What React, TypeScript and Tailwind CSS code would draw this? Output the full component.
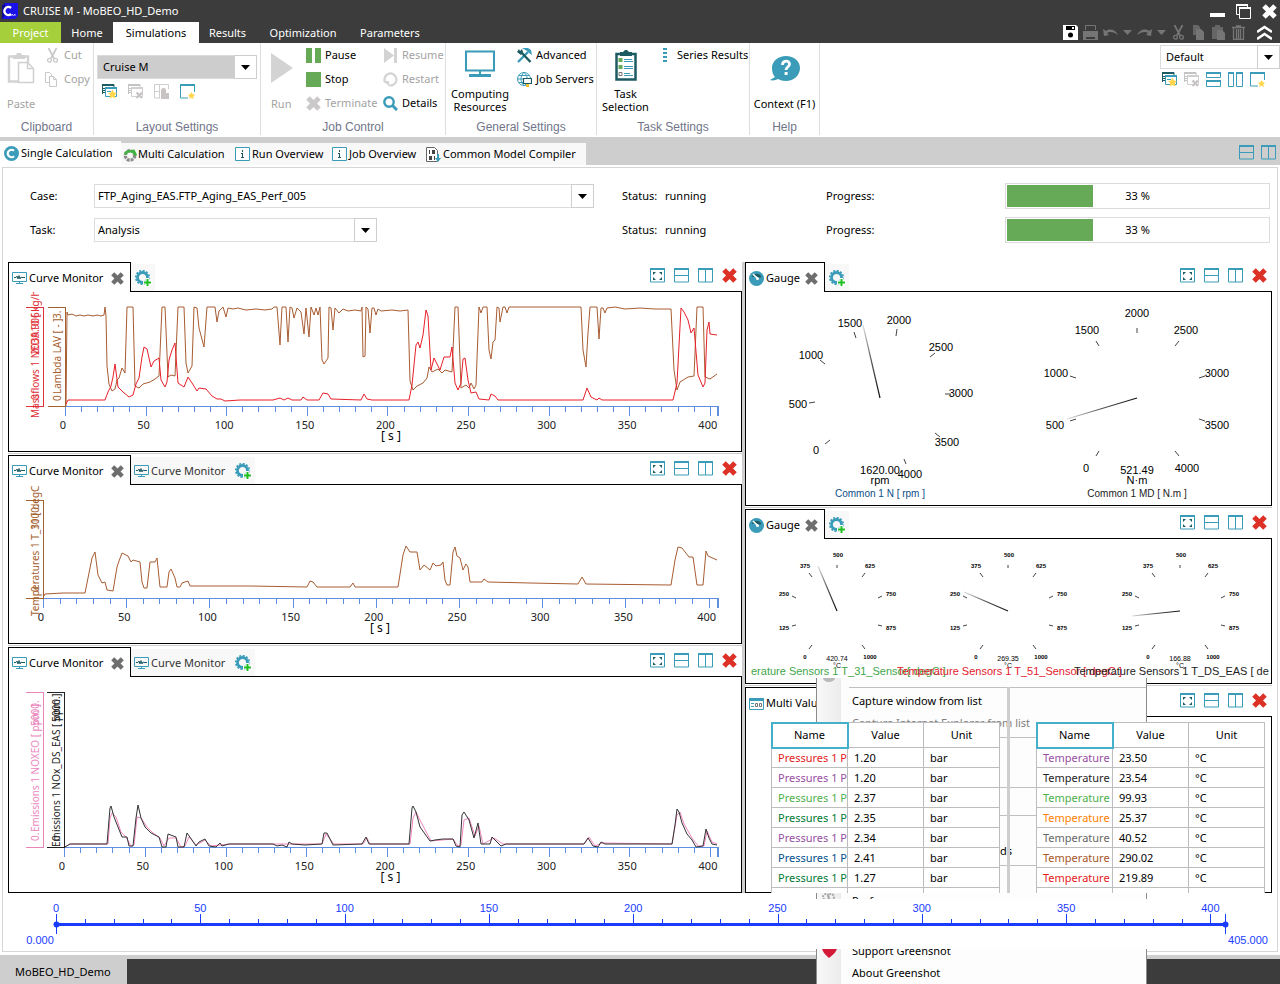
import type { ReactNode } from 'react'

const TEAL = '#3a9cb8'
const DARK_TEAL = '#1d5b63'
const STAR = 'M10.5 5.5l1.500 3 3 .400-2.200 2.200.6 3.400-2.900-1.600-2.900 1.600.6-3.400L6 8.900l3-.4z'

type Point = [number, number]

/* ---------- icons ---------- */

function Icon({ children, size = 15 }: { children: ReactNode; size?: number }) {
  return (
    <svg width={size} height={size} viewBox="0 0 15 15" className="block shrink-0" aria-hidden="true">
      {children}
    </svg>
  )
}

function RowsIcon() {
  return (
    <Icon>
      <path d="M.5 1v13h14V1M.5 7.5h14" fill="none" stroke={TEAL} />
      <path d="M0 0h15v2H0z" fill={TEAL} />
    </Icon>
  )
}

function ColumnsIcon() {
  return (
    <Icon>
      <path d="M.5 1v13h14V1M7.5 1v13" fill="none" stroke={TEAL} />
      <path d="M0 0h15v2H0z" fill={TEAL} />
    </Icon>
  )
}

function FullIcon() {
  return (
    <Icon>
      <path d="M.5 1v13h14V1" fill="none" stroke={TEAL} />
      <path d="M0 0h15v2H0z" fill={TEAL} />
      <path d="M3 4h3L3 7zM12 4v3L9 4zM3 12V9l3 3zM12 12H9l3-3z" fill={DARK_TEAL} />
    </Icon>
  )
}

function SplitRowsIcon() {
  return (
    <Icon>
      <path d="M.5.5h14v5H.5zM.5 9.5h14v5H.5z" fill="none" stroke={TEAL} />
      <path d="M0 0h15v2H0zM0 8h15v2H0z" fill={TEAL} />
    </Icon>
  )
}

function SplitColumnsIcon() {
  return (
    <Icon>
      <path d="M.5.5h5v14h-5zM8.5.5h6v14h-6z" fill="none" stroke={TEAL} />
      <path d="M0 0h6v2H0zM8 0h7v2H8z" fill={TEAL} />
    </Icon>
  )
}

function LayoutStarIcon() {
  return (
    <Icon>
      <path d="M.5 10V.5H12V3" fill="none" stroke={DARK_TEAL} />
      <path d="M0 0h12v2H0zM1 4h2v1H1zM1 6h2v1H1zM1 8h2v1H1z" fill={DARK_TEAL} />
      <path d="M3.5 3.5h11v9h-11z" fill="#fff" stroke={TEAL} />
      <path d="M3 3h12v2H3zM5 7h4v1H5z" fill={TEAL} />
      <path d={STAR} fill="#ffd54a" />
    </Icon>
  )
}

function LayoutDeleteIcon() {
  return (
    <Icon>
      <path d="M.5 10V.5H12V3" fill="none" stroke="#c4c4c4" />
      <path d="M0 0h12v2H0zM1 4h2v1H1zM1 6h2v1H1zM1 8h2v1H1z" fill="#c4c4c4" />
      <path d="M3.5 3.5h11v9h-11z" fill="#fff" stroke="#d0d0d0" />
      <path d="M3 3h12v2H3z" fill="#d0d0d0" />
      <path d="M8.5 8.5l5.5 5.5M14 8.5L8.5 14" stroke="#c8c4c4" strokeWidth="2.4" />
    </Icon>
  )
}

function LayoutSaveIcon() {
  return (
    <Icon>
      <path d="M6 14H.5V.5h14V5M5.5 1v13M1 7.5h5" fill="none" stroke="#cfcfcf" />
      <path d="M7 9h8v6H7z" fill="#c8c4c4" />
      <path d="M7 9V6.500a2.500 2.500 0 015 0V9" fill="#c8c4c4" />
    </Icon>
  )
}

function WindowStarIcon() {
  return (
    <Icon>
      <path d="M8 14H.5V1h14v7" fill="none" stroke={TEAL} />
      <path d="M0 0h15v2H0z" fill={TEAL} />
      <path d="M11.500 8l1.200 2.300 2.300.4-1.700 1.700.5 2.600-2.300-1.200-2.300 1.200.5-2.600L8 10.700l2.300-.4z" fill="#ffd54a" />
    </Icon>
  )
}

function CrossIcon({ color, size = 15 }: { color: string; size?: number }) {
  return (
    <Icon size={size}>
      <path d="M2 2l11 11M13 2L2 13" stroke={color} strokeWidth="5" />
    </Icon>
  )
}

function ScissorsIcon({ color }: { color: string }) {
  return (
    <Icon>
      <path d="M3.500 0l5.500 10.500M11.500 0L6 10.500" stroke={color} strokeWidth="1.800" />
      <circle cx="4.500" cy="12.300" r="1.900" fill="none" stroke={color} strokeWidth="1.300" />
      <circle cx="10.500" cy="12.300" r="1.900" fill="none" stroke={color} strokeWidth="1.300" />
    </Icon>
  )
}

function CopyOutlineIcon() {
  return (
    <Icon>
      <path d="M4 10.500H.5v-10h4l2 2V4M4.500 4.500h4l3 3v7h-7zM8.500 4.500v3h3" fill="none" stroke="#c9c9c9" />
    </Icon>
  )
}

function MonitorCurveIcon() {
  return (
    <Icon>
      <path d="M.5 1.500h14v9H.5zM7.500 10v3M4 12.500h7" fill="none" stroke={TEAL} />
      <path d="M2 6.500h2l1-1.500 1 3 1-3.500 1 3.500 1-2 1 .500h3" fill="none" stroke={DARK_TEAL} />
    </Icon>
  )
}

function GaugeIcon() {
  return (
    <Icon>
      <circle cx="7.500" cy="7.500" r="7.500" fill={TEAL} />
      <path d="M2.500 6a5.500 5.500 0 0110 0L9 7 7.500 5z" fill={DARK_TEAL} />
      <path d="M4 3l4.500 4.500" stroke="#fff" strokeWidth="1.600" />
      <circle cx="8.500" cy="7.500" r="1.500" fill="#fff" />
    </Icon>
  )
}

function MultiValueIcon() {
  return (
    <Icon>
      <path d="M.5 2.500h14v11H.5z" fill="#fff" stroke={TEAL} />
      <path d="M0 2h15v3H0zM2 7h3v1H2zM2 10h3v1H2z" fill={TEAL} />
      <path d="M6.500 7.500h2v3h-2zM10.500 7.500h2v3h-2z" fill="none" stroke="#777" />
    </Icon>
  )
}

function GearPlusIcon() {
  return (
    <svg width="17" height="17" viewBox="0 0 17 17" className="block" aria-hidden="true">
      <circle cx="7.500" cy="7.500" r="5" fill="none" stroke={TEAL} strokeWidth="2.800" />
      <circle cx="7.500" cy="7.500" r="6.800" fill="none" stroke={TEAL} strokeWidth="1.600" strokeDasharray="2 1.560" />
      <path d="M8 12.500h9M12.500 8v9" stroke="#fff" strokeWidth="4" />
      <path d="M9 12.500h7M12.500 9v7" stroke="#1fbf1f" strokeWidth="2" />
    </svg>
  )
}

function InfoIcon() {
  return (
    <Icon>
      <path d="M.5.5h14v13H.5z" fill="#fff" stroke={TEAL} />
      <path d="M7 3h1v2H7zM6 6h2v4h1v1H6v-1h1V7H6z" fill={DARK_TEAL} />
    </Icon>
  )
}

function Arrow({ color = '#000' }: { color?: string }) {
  return (
    <svg width="9" height="5" viewBox="0 0 9 5" className="block" aria-hidden="true">
      <path d="M0 0h9L4.500 5z" fill={color} />
    </svg>
  )
}

/* ---------- form pieces ---------- */

type ComboProps = {
  id: string
  value: string
  className: string
  selectClass?: string
  label?: string
}

function Combo({ id, value, className, selectClass = 'bg-white pl-1', label }: ComboProps) {
  return (
    <div className={`relative h-6 ${className}`}>
      <select
        id={id}
        aria-label={label}
        defaultValue={value}
        className={`h-full w-full appearance-none border border-[#dcdcdc] pr-6 outline-none ${selectClass}`}
      >
        <option>{value}</option>
      </select>
      <span className="pointer-events-none absolute inset-y-0 right-0 flex w-[23px] items-center justify-center border border-[#cecece] bg-white pr-px">
        <Arrow />
      </span>
    </div>
  )
}

function IconButton({ label, children }: { label: string; children: ReactNode }) {
  return (
    <button type="button" aria-label={label} className="flex h-4 shrink-0 items-center justify-center">
      {children}
    </button>
  )
}

/* ---------- title bar and ribbon ---------- */

const menuTabs = [
  { name: 'Project', className: 'w-[61px] bg-[#a6cf3c] text-white' },
  { name: 'Home', className: 'w-[52px] text-white' },
  { name: 'Simulations', className: 'w-[86px] bg-white text-black' },
  { name: 'Results', className: 'w-[57px] text-white' },
  { name: 'Optimization', className: 'w-[94px] text-white' },
  { name: 'Parameters', className: 'w-[80px] text-white' },
]

function TitleBar() {
  return (
    <header className="bg-[#3c3c3c] text-white">
      <div className="flex h-[22px] items-center gap-[5px] pr-[3px] pl-[2px]">
        <svg width="16" height="16" viewBox="0 0 16 16" aria-hidden="true">
          <path d="M0 3l3-3h13v13l-3 3H0z" fill="#1a10e8" />
          <path d="M0 3l3-3v12l-3 4z" fill="#0c0890" />
          <path d="M9 5a4 4 0 100 6" fill="none" stroke="#fff" strokeWidth="2.400" />
          <path d="M10 13v-2l1.500 1.500L13 11v2" fill="none" stroke="#dde" strokeWidth=".8" />
        </svg>
        <h1>CRUISE M - MoBEO_HD_Demo</h1>
        <div className="ml-auto flex items-center gap-[11px]">
          <IconButton label="Minimize">
            <Icon>
              <path d="M0 9h15v4H0z" fill="#fff" />
            </Icon>
          </IconButton>
          <IconButton label="Restore">
            <Icon>
              <path d="M3 10.500H.5v-10h11V3M3.500 3.500h11v11h-11z" fill="none" stroke="#fff" />
              <path d="M0 0h12v2H0zM3 3h12v2H3z" fill="#fff" />
            </Icon>
          </IconButton>
          <IconButton label="Close">
            <CrossIcon color="#fff" />
          </IconButton>
        </div>
      </div>
      <nav className="flex h-[21px] items-stretch">
        {menuTabs.map((tab) => (
          <button key={tab.name} type="button" className={`pt-px text-center ${tab.className}`}>
            {tab.name}
          </button>
        ))}
        <div className="ml-auto flex items-center gap-[5px] pr-2">
          <IconButton label="Save">
            <Icon>
              <path d="M0 0h13l2 2v13H0z" fill="#fff" />
              <path d="M3 1h9v4H3z" fill="#000" />
              <path d="M9 2h2v2H9z" fill="#fff" />
              <circle cx="7.500" cy="10" r="2.500" fill="#000" />
            </Icon>
          </IconButton>
          <IconButton label="Print">
            <Icon>
              <path d="M2.500 5V.5h10V5" fill="none" stroke="#757575" />
              <path d="M0 6h15v9H0z" fill="#757575" />
              <path d="M3 12h9v2H3z" fill="#3c3c3c" />
            </Icon>
          </IconButton>
          <IconButton label="Undo">
            <Icon>
              <path d="M0 4l1 7 5-1-2-2c3-2 7-1 11 2-2-5-8-7-12-4z" fill="#757575" />
            </Icon>
          </IconButton>
          <Arrow color="#757575" />
          <IconButton label="Redo">
            <Icon>
              <path d="M15 4l-1 7-5-1 2-2C8 6 4 7 0 10 2 5 8 3 12 6z" fill="#757575" />
            </Icon>
          </IconButton>
          <Arrow color="#757575" />
          <IconButton label="Cut">
            <ScissorsIcon color="#757575" />
          </IconButton>
          <IconButton label="Copy">
            <Icon>
              <path d="M2 0h5l2 2v8H2z" fill="#666" />
              <path d="M5 4h5l3 3v8H5z" fill="#757575" />
            </Icon>
          </IconButton>
          <IconButton label="Paste">
            <Icon>
              <path d="M1 2h3V0h5v2h3v12H1z" fill="#666" />
              <path d="M6 5h5l3 3v7H6z" fill="#757575" />
            </Icon>
          </IconButton>
          <IconButton label="Delete">
            <Icon>
              <path d="M1 2.500h13M5 1h5M2.500 3v11.500h10V3M5.500 4v10M7.500 4v10M9.500 4v10" fill="none" stroke="#757575" strokeWidth="1.300" />
            </Icon>
          </IconButton>
          <span className="w-px" />
          <IconButton label="Collapse ribbon">
            <Icon>
              <path d="M0 7l7.500-5L15 7M0 14l7.500-5L15 14" fill="none" stroke="#fff" strokeWidth="2.600" />
            </Icon>
          </IconButton>
        </div>
      </nav>
    </header>
  )
}

type GroupProps = { title: string; className: string; children: ReactNode }

function RibbonGroup({ title, className, children }: GroupProps) {
  return (
    <section className={`flex h-[92px] flex-col border-r border-[#dedede] ${className}`}>
      <div className="flex h-[76px]">{children}</div>
      <h2 className="pt-px text-center font-['Liberation_Sans',sans-serif] text-[12px] leading-4 text-[#70758a]">
        {title}
      </h2>
    </section>
  )
}

type SmallButtonProps = { label: string; icon: ReactNode; disabled?: boolean }

function SmallButton({ label, icon, disabled }: SmallButtonProps) {
  return (
    <button
      type="button"
      disabled={disabled}
      className="flex h-6 items-center gap-1 whitespace-nowrap text-black disabled:text-[#a3a3a3]"
    >
      {icon}
      {label}
    </button>
  )
}

function Ribbon() {
  return (
    <div className="flex h-[94px] bg-white">
      <RibbonGroup title="Clipboard" className="w-[94px]">
        <button type="button" disabled className="flex w-[45px] flex-col pl-[7px] text-left text-[#a3a3a3]">
          <span className="flex h-[50px] items-center">
            <svg width="28" height="32" viewBox="0 0 28 32" aria-hidden="true">
              <path d="M11 29.500H2v-25h19v6" fill="none" stroke="#d3d3d3" strokeWidth="2.400" />
              <path d="M6 3h3l1-2h4l1 2h3v4H6z" fill="#d3d3d3" />
              <path d="M11.500 10.500h9l6 6v14h-15zM20.500 10.500v6h6" fill="#fff" stroke="#d0d0d0" strokeWidth="1.500" />
            </svg>
          </span>
          <span className="leading-[22px]">Paste</span>
        </button>
        <div className="flex flex-col">
          <SmallButton label="Cut" disabled icon={<ScissorsIcon color="#c9c9c9" />} />
          <SmallButton label="Copy" disabled icon={<CopyOutlineIcon />} />
        </div>
      </RibbonGroup>

      <RibbonGroup title="Layout Settings" className="w-[167px]">
        <div className="flex flex-col gap-1 pt-3 pl-[3px]">
          <Combo id="layout" label="Layout" value="Cruise M" className="w-[160px]" selectClass="bg-[#cdcdcd] pl-[5px]" />
          <div className="flex gap-[11px] pl-[5px]">
            <IconButton label="Save layout">
              <LayoutStarIcon />
            </IconButton>
            <IconButton label="Delete layout">
              <LayoutDeleteIcon />
            </IconButton>
            <IconButton label="Lock layout">
              <LayoutSaveIcon />
            </IconButton>
            <IconButton label="New window">
              <WindowStarIcon />
            </IconButton>
          </div>
        </div>
      </RibbonGroup>

      <RibbonGroup title="Job Control" className="w-[185px]">
        <button type="button" disabled className="flex w-[45px] flex-col pl-[10px] text-left text-[#a3a3a3]">
          <span className="flex h-[50px] items-center">
            <svg width="22" height="30" viewBox="0 0 22 30" aria-hidden="true">
              <path d="M0 0l22 15L0 30z" fill="#d3d3d3" />
            </svg>
          </span>
          <span className="leading-[22px]">Run</span>
        </button>
        <div className="flex w-[77px] flex-col">
          <SmallButton label="Pause" icon={<Icon><path d="M0 0h6v15H0zM9 0h6v15H9z" fill="#66a957" /></Icon>} />
          <SmallButton label="Stop" icon={<Icon><path d="M0 0h15v15H0z" fill="#66a957" /></Icon>} />
          <SmallButton label="Terminate" disabled icon={<CrossIcon color="#cbc9c9" />} />
        </div>
        <div className="flex flex-col">
          <SmallButton label="Resume" disabled icon={<Icon><path d="M1 0l10 7.500L1 15zM11 0h3v15h-3z" fill="#d3d3d3" /></Icon>} />
          <SmallButton
            label="Restart"
            disabled
            icon={
              <Icon>
                <path d="M6 13.300a6 6 0 10-3.800-3" fill="none" stroke="#d3d3d3" strokeWidth="2.200" />
                <path d="M0 9h6v5z" fill="#d3d3d3" />
              </Icon>
            }
          />
          <SmallButton
            label="Details"
            icon={
              <Icon>
                <circle cx="6" cy="6" r="4.700" fill="none" stroke={TEAL} strokeWidth="2.400" />
                <path d="M9 9l5 5" stroke={TEAL} strokeWidth="3" />
              </Icon>
            }
          />
        </div>
      </RibbonGroup>

      <RibbonGroup title="General Settings" className="w-[151px]">
        <button type="button" className="flex w-[68px] flex-col items-center text-center">
          <span className="flex h-[44px] items-end pb-[9px]">
            <svg width="30" height="28" viewBox="0 0 30 28" aria-hidden="true">
              <path d="M1 1.500h28v19H1zM15 21v5" fill="none" stroke={TEAL} strokeWidth="2" />
              <path d="M4 24h22v3H4z" fill={TEAL} />
            </svg>
          </span>
          <span className="leading-[13px]">Computing Resources</span>
        </button>
        <div className="flex flex-col pl-[3px]">
          <SmallButton
            label="Advanced"
            icon={
              <Icon>
                <path d="M1 14L11 4" stroke={TEAL} strokeWidth="2.400" />
                <path d="M5 0h6l3 2 1 5-3-2-2-2z" fill={TEAL} />
                <path d="M4 4l9.500 10" stroke={DARK_TEAL} strokeWidth="2.400" />
                <path d="M0 4l2-3 1 2 2-2 1 3-2 3z" fill={DARK_TEAL} />
              </Icon>
            }
          />
          <SmallButton
            label="Job Servers"
            icon={
              <Icon>
                <circle cx="7" cy="7" r="6.500" fill="none" stroke={TEAL} />
                <path d="M.5 7h13M7 .5C3 4 3 10 7 13.500M7 .5c4 3 4 8 1 13M2 3.500h10M2 10.500h10" fill="none" stroke={TEAL} />
                <path d="M6.500 6.500h8v5h-8z" fill="#fff" stroke={DARK_TEAL} strokeWidth="1.200" />
                <path d="M9 12h3v3H9z" fill="#f2c230" />
              </Icon>
            }
          />
        </div>
      </RibbonGroup>

      <RibbonGroup title="Task Settings" className="w-[153px]">
        <button type="button" className="flex w-[57px] flex-col items-center text-center">
          <span className="flex h-[44px] items-end pb-[6px]">
            <svg width="22" height="31" viewBox="0 0 22 31" aria-hidden="true">
              <path d="M1.500 4h19v25.500h-19z" fill="#fff" stroke={DARK_TEAL} strokeWidth="2.500" />
              <path d="M5 2h3l2-2h2l2 2h3v4H5z" fill={DARK_TEAL} />
              <path d="M3.500 8h4v4h-4zM3.500 15h4v4h-4z" fill="#66a957" />
              <path d="M4 22.500h3v3H4z" fill="none" stroke="#777" />
              <path d="M9 9.500h8M9 11.500h9M9 16.500h9M9 18.500h9M9 23.500h6M9 25.500h9" stroke={TEAL} />
            </svg>
          </span>
          <span className="leading-[13px]">Task Selection</span>
        </button>
        <div className="flex flex-col pl-1">
          <SmallButton
            label="Series Results"
            icon={<Icon><path d="M5 0h4v2H5zM5 4h4v2H5zM5 8h4v2H5zM5 12h4v2H5z" fill={TEAL} /></Icon>}
          />
        </div>
      </RibbonGroup>

      <RibbonGroup title="Help" className="w-[70px]">
        <button type="button" className="flex w-full flex-col items-center whitespace-nowrap">
          <span className="flex h-[50px] items-center">
            <svg width="30" height="25" viewBox="0 0 30 25" aria-hidden="true">
              <path d="M16 0C8 0 2 5 2 12c0 4 1 7 3 9l-5 3c3 1 6 0 8-1 2 1 5 2 8 2 8 0 14-6 14-13S24 0 16 0z" fill={TEAL} />
              <path d="M12.500 9c0-5 7-5 7-1 0 3-3.500 3-3.500 6" fill="none" stroke="#fff" strokeWidth="2.800" />
              <path d="M14.600 16h3v3h-3z" fill="#fff" />
            </svg>
          </span>
          <span className="leading-[22px]">Context (F1)</span>
        </button>
      </RibbonGroup>

      <div className="ml-auto flex w-[120px] flex-col gap-[2px] pt-[2px]">
        <Combo id="view" label="View" value="Default" className="w-full" selectClass="bg-white pl-[5px]" />
        <div className="flex gap-[7px] pl-[2px]">
          <IconButton label="Save view">
            <LayoutStarIcon />
          </IconButton>
          <IconButton label="Delete view">
            <LayoutDeleteIcon />
          </IconButton>
          <IconButton label="Split rows">
            <SplitRowsIcon />
          </IconButton>
          <IconButton label="Split columns">
            <SplitColumnsIcon />
          </IconButton>
          <IconButton label="New view">
            <WindowStarIcon />
          </IconButton>
        </div>
      </div>
    </div>
  )
}

function DocumentTabs() {
  return (
    <div className="flex h-7 items-end bg-[#cecece] pr-1 whitespace-nowrap">
      <button type="button" className="flex h-6 w-[121px] items-center gap-[2px] bg-white pt-px pl-1">
        <Icon>
          <circle cx="7.500" cy="7.500" r="7.500" fill={TEAL} />
          <path d="M10 4.800a3.700 3.700 0 100 5.400" fill="none" stroke="#fff" strokeWidth="2.200" />
        </Icon>
        Single Calculation
      </button>
      <button type="button" className="flex h-[22px] w-[111px] items-center gap-px bg-[#f8f8f8] pt-px pl-[2px]">
        <Icon size={14}>
          <circle cx="7.500" cy="8" r="5" fill="none" stroke="#8d8d8d" strokeWidth="3.600" strokeDasharray="3 1" />
          <path d="M2 7a6 6 0 0111 0M11 2l3 6" fill="none" stroke="#3fb53f" strokeWidth="2.400" />
        </Icon>
        Multi Calculation
      </button>
      <button type="button" className="flex h-[22px] w-[98px] items-center gap-[2px] bg-[#f8f8f8] pt-px pl-[3px]">
        <InfoIcon />
        Run Overview
      </button>
      <button type="button" className="flex h-[22px] w-[94px] items-center gap-[2px] bg-[#f8f8f8] pt-px pl-[2px]">
        <InfoIcon />
        Job Overview
      </button>
      <button type="button" className="flex h-[22px] w-[162px] items-center gap-[2px] bg-[#f8f8f8] pt-px pl-[2px]">
        <Icon>
          <path d="M.5.5h8l3 3v11H.5z" fill="#fff" stroke="#666" />
          <path d="M3 3h1v4H3zM6 3h3v4H6zM3 9h3v4H3zM8 9h1v4H8z" fill="#444" />
          <path d="M11 7h2v4h2l-3 4-3-4h2z" fill={TEAL} />
        </Icon>
        Common Model Compiler
      </button>
      <div className="ml-auto flex gap-[7px] pb-[5px]">
        <IconButton label="Split horizontally">
          <RowsIcon />
        </IconButton>
        <IconButton label="Split vertically">
          <ColumnsIcon />
        </IconButton>
      </div>
    </div>
  )
}

/* ---------- run status ---------- */

type StatusRowProps = {
  id: string
  label: string
  value: string
  comboWidth: string
  progress: number
}

function StatusRow({ id, label, value, comboWidth, progress }: StatusRowProps) {
  return (
    <div className="grid h-[26px] grid-cols-[64px_528px_43px_161px_179px_1fr] items-center">
      <label htmlFor={id}>{label}</label>
      <Combo id={id} value={value} className={comboWidth} selectClass="bg-white pl-[3px]" />
      <span>Status:</span>
      <span>running</span>
      <span>Progress:</span>
      <div
        role="progressbar"
        aria-label={`${label} progress`}
        aria-valuenow={progress}
        className="relative h-[26px] border border-[#dcdcdc] p-px"
      >
        <div className="h-full bg-[#66a957]" style={{ width: `${progress}%` }} />
        <span className="absolute inset-0 text-center leading-6">{progress} %</span>
      </div>
    </div>
  )
}

/* ---------- docked panels ---------- */

type PanelProps = {
  title: string
  icon: ReactNode
  tabWidth: string
  second?: string
  closable?: boolean
  className?: string
  children: ReactNode
}

function Panel({ title, icon, tabWidth, second, closable = true, className = '', children }: PanelProps) {
  return (
    <section className={`flex flex-col bg-white ${className}`}>
      <div className="flex h-[29px] whitespace-nowrap">
        <button
          type="button"
          className={`relative flex h-[30px] items-center gap-[2px] border-x border-t border-black bg-white pt-px pl-[3px] ${tabWidth}`}
        >
          {icon}
          {title}
          {closable ? (
            <span className="ml-auto pr-[6px]">
              <CrossIcon color="#6e6e6e" size={13} />
            </span>
          ) : null}
        </button>
        {second ? (
          <button type="button" className="mt-[2px] flex w-[100px] items-center gap-[2px] bg-[#f8f8f8] pt-px pl-[3px] text-[#333]">
            <MonitorCurveIcon />
            {second}
          </button>
        ) : null}
        {closable ? (
          <button
            type="button"
            aria-label="Add monitor"
            className="mt-[2px] flex w-[24px] items-center justify-center bg-[#f8f8f8] pt-px"
          >
            <GearPlusIcon />
          </button>
        ) : null}
        <div className="ml-auto flex items-start gap-[9px] pt-[5px] pr-[5px]">
          <IconButton label="Full size">
            <FullIcon />
          </IconButton>
          <IconButton label="Split horizontally">
            <RowsIcon />
          </IconButton>
          <IconButton label="Split vertically">
            <ColumnsIcon />
          </IconButton>
          <IconButton label="Close panel">
            <CrossIcon color="#dd3026" />
          </IconButton>
        </div>
      </div>
      <div className="grow border border-black">{children}</div>
    </section>
  )
}

function Divider() {
  return <div className="my-px h-px bg-[#cecece]" />
}

/* ---------- curve charts ---------- */

const toPoints = (points: Point[]) => points.map((p) => p.join(',')).join(' ')

function Curve({ points, color }: { points: Point[]; color: string }) {
  return <polyline points={toPoints(points)} fill="none" stroke={color} strokeWidth="1" />
}

const tens = Array.from({ length: 41 }, (_, i) => i * 10)

function TimeAxis({ x, y, scale }: { x: number; y: number; scale: number }) {
  return (
    <g>
      <path d={`M${x} ${y + 0.5}H718`} stroke="#5f8fe0" shapeRendering="crispEdges" />
      <path d={`M718 ${y}v10`} stroke="#5f8fe0" strokeWidth="2" shapeRendering="crispEdges" />
      {tens.map((t) => (
        <path
          key={t}
          d={`M${Math.round(x + t * scale) - 0.5} ${y}v${t % 50 === 0 ? 10 : 6}`}
          stroke="#5f8fe0"
          shapeRendering="crispEdges"
        />
      ))}
      {tens
        .filter((t) => t % 50 === 0)
        .map((t) => (
          <text key={t} x={x + t * scale - 3} y={y + 23} textAnchor="middle" fontSize="11" fill="#222">
            {t}
          </text>
        ))}
      <text x={(x + 718) / 2 - 1} y={y + 34} textAnchor="middle" fontSize="12">
        [ s ]
      </text>
    </g>
  )
}

type ValueAxisProps = {
  x: number
  top: number
  bottom: number
  color: string
  name: string
  nameY: number
  max: string
  maxY: number
  min: string
  minY: number
}

function ValueAxis({ x, top, bottom, color, name, nameY, max, maxY, min, minY }: ValueAxisProps) {
  return (
    <g fill={color} fontSize="10">
      <path
        d={`M${x - 17} ${top + 0.5}h17.500V${bottom + 0.5}h-17.500`}
        fill="none"
        stroke={color}
        shapeRendering="crispEdges"
      />
      <text transform={`translate(${x - 4} ${nameY}) rotate(-90)`}>{name}</text>
      <text transform={`translate(${x - 4} ${maxY}) rotate(-90)`}>{max}</text>
      <text transform={`translate(${x - 4} ${minY}) rotate(-90)`}>{min}</text>
    </g>
  )
}

const lambda: Point[] = [
  [66, 406], [67, 312], [68, 315], [72, 314], [76, 316], [80, 315], [84, 316], [88, 315], [93, 316], [97, 315],
  [101, 316], [104, 315], [105, 307], [106, 316], [107, 366], [109, 384], [112, 391], [115, 389], [117, 380],
  [119, 378], [122, 368], [125, 373], [127, 307], [133, 307], [135, 386], [139, 388], [143, 384], [150, 382],
  [155, 379], [159, 376], [162, 307], [165, 307], [168, 377], [171, 375], [175, 376], [178, 307], [184, 307],
  [186, 363], [188, 373], [192, 366], [194, 307], [197, 308], [199, 328], [204, 347], [207, 307], [215, 307],
  [217, 322], [219, 311], [223, 307], [226, 317], [228, 308], [233, 309], [238, 308], [246, 310], [256, 309],
  [265, 310], [272, 309], [274, 307], [277, 307], [280, 345], [282, 307], [286, 307], [288, 342], [290, 307],
  [292, 308], [294, 318], [297, 308], [301, 312], [304, 334], [306, 308], [309, 337], [311, 307], [314, 315],
  [316, 308], [318, 315], [320, 307], [322, 360], [324, 364], [328, 358], [329, 307], [331, 308], [333, 330],
  [335, 308], [339, 313], [343, 309], [348, 311], [355, 310], [361, 311], [362, 307], [363, 357], [365, 356],
  [366, 307], [368, 309], [370, 333], [372, 308], [374, 308], [376, 315], [378, 309], [381, 311], [392, 310],
  [400, 311], [408, 310], [410, 381], [413, 390], [417, 386], [423, 383], [427, 378], [429, 367], [432, 372],
  [438, 369], [442, 373], [445, 370], [452, 372], [455, 307], [458, 307], [461, 388], [466, 385], [469, 388],
  [471, 383], [474, 389], [476, 385], [479, 307], [481, 313], [483, 307], [487, 307], [489, 350], [491, 359],
  [493, 342], [495, 340], [497, 307], [499, 308], [500, 322], [503, 307], [505, 307], [507, 313], [509, 307],
  [581, 307], [583, 350], [586, 367], [588, 333], [590, 307], [597, 307], [599, 339], [601, 308], [603, 308],
  [605, 313], [607, 308], [615, 307], [625, 309], [640, 308], [655, 309], [671, 309], [674, 370], [677, 390],
  [680, 382], [688, 377], [694, 376], [697, 307], [703, 307], [705, 377], [710, 379], [717, 374],
]

const massflow: Point[] = [
  [66, 404], [68, 400], [105, 400], [108, 392], [111, 386], [113, 377], [115, 364], [118, 387], [123, 392],
  [129, 397], [133, 395], [136, 384], [139, 378], [142, 357], [144, 347], [147, 349], [151, 367], [154, 361],
  [159, 358], [161, 380], [165, 387], [167, 382], [169, 360], [172, 350], [175, 343], [178, 383], [184, 387],
  [188, 377], [192, 383], [197, 391], [199, 388], [206, 389], [212, 396], [217, 399], [221, 399], [225, 401],
  [240, 400], [273, 400], [280, 398], [284, 400], [288, 398], [292, 400], [301, 400], [303, 397], [307, 400],
  [319, 400], [323, 393], [328, 394], [331, 399], [361, 400], [364, 394], [367, 399], [372, 400], [409, 400],
  [412, 385], [416, 345], [418, 342], [420, 348], [423, 335], [426, 310], [428, 316], [431, 370], [434, 358],
  [440, 370], [444, 357], [450, 357], [452, 347], [455, 383], [458, 390], [461, 383], [463, 359], [465, 358],
  [468, 380], [471, 393], [476, 392], [479, 399], [489, 400], [491, 394], [495, 396], [498, 400], [583, 400],
  [587, 388], [591, 397], [597, 400], [599, 398], [602, 400], [673, 400], [677, 383], [681, 308], [684, 312],
  [688, 320], [691, 333], [694, 328], [698, 375], [703, 387], [705, 383], [707, 330], [709, 322], [710, 334],
  [717, 335],
]

const temperature: Point[] = [
  [44, 596], [45, 594], [63, 593], [85, 593], [87, 583], [92, 558], [95, 552], [98, 575], [102, 583], [105, 582],
  [107, 590], [113, 591], [117, 567], [119, 561], [122, 553], [128, 556], [131, 562], [133, 560], [140, 562],
  [142, 582], [144, 588], [147, 588], [150, 562], [155, 562], [157, 558], [160, 587], [167, 587], [169, 572],
  [171, 569], [175, 578], [177, 587], [180, 587], [182, 583], [188, 581], [190, 586], [250, 586], [307, 587],
  [310, 581], [313, 582], [317, 587], [350, 587], [353, 583], [355, 587], [398, 587], [403, 555], [406, 546],
  [410, 552], [417, 552], [420, 570], [424, 565], [430, 570], [433, 563], [436, 566], [441, 565], [443, 562],
  [445, 580], [447, 585], [450, 585], [453, 552], [455, 547], [457, 556], [460, 558], [463, 570], [466, 564],
  [468, 567], [470, 582], [482, 582], [484, 579], [488, 582], [530, 583], [578, 584], [582, 577], [586, 584],
  [671, 585], [675, 560], [678, 547], [682, 548], [689, 557], [693, 557], [697, 585], [703, 585], [706, 551],
  [708, 556], [717, 560],
]

const noxEas: Point[] = [
  [65, 847], [70, 844], [107, 844], [110, 808], [111, 806], [114, 817], [118, 827], [122, 837], [127, 837],
  [129, 846], [133, 846], [136, 818], [138, 805], [141, 818], [145, 827], [151, 833], [159, 837], [162, 847],
  [166, 847], [168, 834], [176, 837], [178, 847], [184, 847], [187, 833], [192, 840], [196, 846], [199, 842],
  [205, 839], [209, 846], [216, 847], [220, 843], [222, 846], [229, 844], [273, 844], [277, 846], [282, 845],
  [287, 847], [289, 842], [292, 844], [305, 845], [322, 844], [324, 833], [327, 833], [333, 845], [362, 844],
  [366, 837], [369, 844], [409, 844], [412, 808], [413, 806], [416, 812], [420, 827], [430, 841], [435, 840],
  [443, 839], [453, 839], [456, 846], [460, 847], [462, 815], [464, 812], [469, 820], [474, 838], [478, 823],
  [481, 844], [490, 844], [492, 837], [497, 842], [501, 846], [506, 844], [584, 844], [588, 838], [593, 846],
  [598, 847], [601, 842], [605, 844], [672, 844], [675, 825], [677, 809], [679, 812], [682, 823], [687, 834],
  [692, 840], [696, 847], [703, 846], [706, 829], [709, 838], [712, 844], [717, 845],
]

const noxEo: Point[] = [
  [65, 847], [70, 844], [108, 844], [110, 818], [112, 813], [116, 817], [121, 832], [126, 837], [131, 846],
  [134, 845], [137, 817], [141, 818], [147, 827], [153, 833], [160, 838], [164, 846], [169, 838], [176, 838],
  [181, 847], [185, 846], [189, 837], [196, 845], [205, 840], [211, 846], [229, 844], [322, 844], [326, 834],
  [334, 844], [363, 844], [367, 838], [370, 844], [410, 844], [413, 818], [416, 812], [421, 822], [431, 841],
  [453, 839], [458, 846], [461, 845], [464, 820], [469, 818], [475, 836], [479, 826], [483, 844], [494, 838],
  [503, 844], [584, 844], [589, 837], [595, 846], [602, 843], [672, 844], [677, 815], [680, 812], [684, 824],
  [692, 838], [698, 846], [704, 846], [707, 831], [712, 842], [717, 844],
]

function MassflowChart() {
  return (
    <svg viewBox="9 292 732 159" className="block h-auto w-full" role="img" aria-label="Massflow and lambda">
      <TimeAxis x={66} y={406} scale={1.612} />
      <Curve points={lambda} color="#a85c32" />
      <Curve points={massflow} color="#e8202a" />
      <ValueAxis
        x={43} top={307} bottom={406} color="#e03038"
        name="Massflows 1 NEDA10 [ kg/h" nameY={418} max="2039.906" maxY={355} min="0" minY={400}
      />
      <ValueAxis
        x={65} top={307} bottom={406} color="#a5602f"
        name="Lambda LAV [ - ]" nameY={394} max="3." maxY={319} min="0" minY={401}
      />
    </svg>
  )
}

function TemperatureChart() {
  return (
    <svg viewBox="9 485 732 158" className="block h-auto w-full" role="img" aria-label="Temperature">
      <TimeAxis x={44} y={598} scale={1.664} />
      <Curve points={temperature} color="#a85c32" />
      <ValueAxis
        x={43} top={500} bottom={598} color="#a5602f"
        name="Temperatures 1 T_31 [ degC" nameY={616} max="1000." maxY={530} min="0" minY={592}
      />
    </svg>
  )
}

function EmissionChart() {
  return (
    <svg viewBox="9 677 732 215" className="block h-auto w-full" role="img" aria-label="Emissions">
      <TimeAxis x={65} y={847} scale={1.615} />
      <Curve points={noxEo} color="#ef86bd" />
      <Curve points={noxEas} color="#333" />
      <ValueAxis
        x={43} top={692} bottom={847} color="#ea86bd"
        name="Emissions 1 NOXEO [ ppm ]" nameY={832} max="5000." maxY={726} min="0." minY={841}
      />
      <ValueAxis
        x={64} top={692} bottom={847} color="#222"
        name="Emissions 1 NOx_DS_EAS [ ppm ]" nameY={847} max="5000." maxY={722} min="0" minY={841}
      />
    </svg>
  )
}

/* ---------- gauges ---------- */

type Mark = { text: string; at: Point; tick: [number, number, number, number] }

const speedMarks: Mark[] = [
  { text: '0', at: [816, 450], tick: [830, 440, 825, 444] },
  { text: '500', at: [798, 404], tick: [809, 403, 815, 402] },
  { text: '1000', at: [811, 355], tick: [820, 360, 825, 364] },
  { text: '1500', at: [850, 323], tick: [854, 332, 856, 338] },
  { text: '2000', at: [899, 320], tick: [897, 329, 896, 336] },
  { text: '2500', at: [941, 347], tick: [935, 353, 930, 357] },
  { text: '3000', at: [961, 393], tick: [945, 394, 951, 394] },
  { text: '3500', at: [947, 442], tick: [935, 433, 940, 437] },
  { text: '4000', at: [910, 474], tick: [904, 459, 906, 464] },
]

const torqueMarks: Mark[] = [
  { text: '0', at: [1086, 468], tick: [1099, 451, 1096, 456] },
  { text: '500', at: [1055, 425], tick: [1070, 421, 1076, 419] },
  { text: '1000', at: [1056, 373], tick: [1070, 376, 1076, 378] },
  { text: '1500', at: [1087, 330], tick: [1096, 341, 1099, 346] },
  { text: '2000', at: [1137, 313], tick: [1137, 328, 1137, 333] },
  { text: '2500', at: [1186, 330], tick: [1179, 341, 1175, 346] },
  { text: '3000', at: [1217, 373], tick: [1205, 376, 1199, 378] },
  { text: '3500', at: [1217, 425], tick: [1205, 421, 1199, 419] },
  { text: '4000', at: [1187, 468], tick: [1175, 451, 1179, 456] },
]

// relative to the hub of a sensor gauge
const sensorMarks: Mark[] = [
  { text: '0', at: [-32, 46], tick: [-28, 38, -25, 34] },
  { text: '125', at: [-53, 17], tick: [-45, 15, -41, 14] },
  { text: '250', at: [-53, -17], tick: [-45, -15, -41, -13] },
  { text: '375', at: [-32, -45], tick: [-28, -38, -25, -34] },
  { text: '500', at: [1, -56], tick: [0, -46, 0, -43] },
  { text: '625', at: [33, -45], tick: [28, -38, 25, -34] },
  { text: '750', at: [54, -17], tick: [45, -15, 41, -13] },
  { text: '875', at: [54, 17], tick: [45, 15, 41, 14] },
  { text: '1000', at: [33, 46], tick: [28, 38, 25, 34] },
]

function Marks({ marks, size, weight }: { marks: Mark[]; size: number; weight?: number }) {
  return (
    <g fontSize={size} fontWeight={weight} textAnchor="middle">
      {marks.map(({ text, at, tick }) => (
        <g key={text}>
          <path d={`M${tick[0]} ${tick[1]}L${tick[2]} ${tick[3]}`} stroke="#444" />
          <text x={at[0]} y={at[1] + Math.round(size / 3)}>
            {text}
          </text>
        </g>
      ))}
    </g>
  )
}

function Needle({ id, from, to }: { id: string; from: Point; to: Point }) {
  return (
    <g>
      <linearGradient id={id} gradientUnits="userSpaceOnUse" x1={from[0]} y1={from[1]} x2={to[0]} y2={to[1]}>
        <stop offset="0" stopColor="#111" />
        <stop offset="0.5" stopColor="#555" />
        <stop offset="1" stopColor="#ddd" />
      </linearGradient>
      <path d={`M${from[0]} ${from[1]}L${to[0]} ${to[1]}`} stroke={`url(#${id})`} strokeWidth="1.200" />
    </g>
  )
}

function EngineGauges() {
  return (
    <svg
      viewBox="746 292 525 213"
      className="block h-auto w-full font-['Liberation_Sans',sans-serif]"
      role="img"
      aria-label="Engine gauges"
    >
      <Marks marks={speedMarks} size={11} />
      <Needle id="needle-speed" from={[880, 398]} to={[863, 325]} />
      <Marks marks={torqueMarks} size={11} />
      <Needle id="needle-torque" from={[1137, 398]} to={[1067, 419]} />
      <g fontSize="11" textAnchor="middle">
        <text x="880" y="474">1620.00</text>
        <text x="880" y="484">rpm</text>
        <text x="1137" y="474">521.49</text>
        <text x="1137" y="484">N·m</text>
      </g>
      <g fontSize="10" textAnchor="middle">
        <text x="880" y="497" fill="#0b4f8a">Common 1 N [ rpm ]</text>
        <text x="1137" y="497" fill="#222">Common 1 MD [ N.m ]</text>
      </g>
    </svg>
  )
}

const sensors: { x: number; value: string; needle: Point }[] = [
  { x: 837, value: '420.74', needle: [-19, -45] },
  { x: 1008, value: '269.35', needle: [-44, -19] },
  { x: 1180, value: '166.88', needle: [-48, 5] },
]

function SensorGauges() {
  return (
    <svg
      viewBox="746 539 525 144"
      className="block h-auto w-full font-['Liberation_Sans',sans-serif]"
      role="img"
      aria-label="Temperature sensors"
    >
      {sensors.map(({ x, value, needle }) => (
        <g key={x} transform={`translate(${x} 611)`}>
          <Marks marks={sensorMarks} size={6} weight={700} />
          <Needle id={`needle-${x}`} from={[0, 0]} to={needle} />
          <text x="0" y="50" fontSize="7" textAnchor="middle">
            {value}
          </text>
          <text x="0" y="57" fontSize="7" textAnchor="middle">
            °C
          </text>
        </g>
      ))}
      <g fontSize="11">
        <text x="751" y="675" fill="#3fa64a">erature Sensors 1 T_31_Sensor[ degC ]</text>
        <text x="897" y="675" fill="#e3202c">Temperature Sensors 1 T_51_Sensor [ degC ]</text>
        <text x="1074" y="675" fill="#222">Temperature Sensors 1 T_DS_EAS [ de</text>
      </g>
    </svg>
  )
}

/* ---------- value tables ---------- */

type Row = { name: string; value: string; unit: string; color: string }

const pressures: Row[] = [
  { name: 'Pressures 1 P_', value: '1.20', unit: 'bar', color: 'text-[#e41a1c]' },
  { name: 'Pressures 1 P_', value: '1.20', unit: 'bar', color: 'text-[#984ea3]' },
  { name: 'Pressures 1 P_', value: '2.37', unit: 'bar', color: 'text-[#4daf4a]' },
  { name: 'Pressures 1 P_', value: '2.35', unit: 'bar', color: 'text-[#007a33]' },
  { name: 'Pressures 1 P_', value: '2.34', unit: 'bar', color: 'text-[#984ea3]' },
  { name: 'Pressures 1 P_', value: '2.41', unit: 'bar', color: 'text-[#004f8a]' },
  { name: 'Pressures 1 P_', value: '1.27', unit: 'bar', color: 'text-[#007a33]' },
]

const temperatures: Row[] = [
  { name: 'Temperature', value: '23.50', unit: '°C', color: 'text-[#984ea3]' },
  { name: 'Temperature', value: '23.54', unit: '°C', color: 'text-[#222]' },
  { name: 'Temperature', value: '99.93', unit: '°C', color: 'text-[#4daf4a]' },
  { name: 'Temperature', value: '25.37', unit: '°C', color: 'text-[#ff8000]' },
  { name: 'Temperature', value: '40.52', unit: '°C', color: 'text-[#666]' },
  { name: 'Temperature', value: '290.02', unit: '°C', color: 'text-[#a65628]' },
  { name: 'Temperature', value: '219.89', unit: '°C', color: 'text-[#e41a1c]' },
]

function ValueTable({ rows }: { rows: Row[] }) {
  return (
    <div className="relative z-20 h-[171px] w-[229px] shrink-0 overflow-hidden">
      <table className="w-full table-fixed border-collapse bg-white">
        <thead>
          <tr className="h-[25px]">
            <th className="border border-[#bdbdbd] font-normal outline-2 -outline-offset-1 outline-[#45b0cb]">Name</th>
            <th className="border border-[#bdbdbd] font-normal">Value</th>
            <th className="border border-[#bdbdbd] font-normal">Unit</th>
          </tr>
        </thead>
        <tbody>
          {rows.map((row, i) => (
            <tr key={i} className="h-5">
              <td className={`overflow-hidden border border-[#bdbdbd] py-0 pl-[6px] leading-[18px] whitespace-nowrap ${row.color}`}>
                {row.name}
              </td>
              <td className="border border-[#bdbdbd] py-0 pl-[6px] leading-[18px]">{row.value}</td>
              <td className="border border-[#bdbdbd] py-0 pl-[6px] leading-[18px]">{row.unit}</td>
            </tr>
          ))}
          <tr className="h-5">
            <td className="border border-[#bdbdbd]" />
            <td className="border border-[#bdbdbd]" />
            <td className="border border-[#bdbdbd]" />
          </tr>
        </tbody>
      </table>
    </div>
  )
}

/* ---------- timeline ---------- */

function Timeline() {
  return (
    <svg
      viewBox="8 899 1264 50"
      className="relative z-20 mx-[5px] mt-[6px] block h-auto bg-white font-['Liberation_Sans',sans-serif]"
      role="img"
      aria-label="Timeline"
    >
      <path d="M56 924.500H1225" stroke="#1a3cff" strokeWidth="3" shapeRendering="crispEdges" />
      {tens.map((t) => (
        <path
          key={t}
          d={`M${Math.round(56 + t * 2.886) + 0.5} 924v${t % 50 === 0 ? -10 : -5}`}
          stroke="#1a3cff"
          shapeRendering="crispEdges"
        />
      ))}
      <path d="M56.500 924v10M1225.500 914v20" stroke="#1a3cff" shapeRendering="crispEdges" />
      <circle cx="56.500" cy="924.500" r="3" fill="#1a3cff" />
      <circle cx="1225.500" cy="924.500" r="3" fill="#1a3cff" />
      <g fontSize="11" fill="#1a3cff" textAnchor="middle">
        {tens
          .filter((t) => t % 50 === 0)
          .map((t) => (
            <text key={t} x={56 + t * 2.886} y="912">
              {t}
            </text>
          ))}
        <text x="40" y="944">0.000</text>
        <text x="1248" y="944">405.000</text>
      </g>
    </svg>
  )
}

/* ---------- tray menu ---------- */

function MenuLine() {
  return <div className="h-px bg-[#c0c0c0]" />
}

function TrayMenu() {
  return (
    <aside className="absolute right-[133px] bottom-0 z-10 flex h-[306px] w-[331px] overflow-hidden border-x border-[#8a8a8a] bg-[#fdfdfd]">
      <div className="flex w-6 flex-col items-center bg-linear-to-r from-[#f8f8f8] to-[#ececec]">
        <svg width="16" height="306" viewBox="0 0 16 306" aria-hidden="true">
          <path d="M2 0a6 4 0 0012 0z" fill="#b9b9b9" />
          <circle cx="5" cy="219" r="3" fill="none" stroke="#aaa" strokeWidth="2" strokeDasharray="2 1" />
          <circle cx="10" cy="219" r="3" fill="none" stroke="#aaa" strokeWidth="2" strokeDasharray="2 1" />
          <path d="M1 270q0-4 4-4t3 3q0-3 4-3t4 4q0 4-8 10-7-6-7-10z" fill="#d41838" />
        </svg>
      </div>
      <div className="flex grow flex-col pt-[9px] pl-2 whitespace-nowrap">
        <MenuLine />
        <button type="button" className="mt-[2px] h-[22px] pl-[3px] text-left">Capture window from list</button>
        <button type="button" disabled className="h-[22px] pl-[3px] text-left text-[#7d7d7d]">
          Capture Internet Explorer from list
        </button>
        <div className="mt-[3px]">
          <MenuLine />
        </div>
        <div className="mt-[49px]">
          <MenuLine />
        </div>
        <div className="mt-[27px]">
          <MenuLine />
        </div>
        <div className="mt-[24px] h-[22px] w-[163px] text-right leading-[22px]">ds</div>
        <div className="mt-[3px]">
          <MenuLine />
        </div>
        <button type="button" className="mt-[24px] h-[22px] pl-[3px] text-left">Preferences...</button>
        <button type="button" className="mt-[28px] h-[22px] pl-[3px] text-left">Support Greenshot</button>
        <button type="button" className="h-[22px] pl-[3px] text-left">About Greenshot</button>
      </div>
    </aside>
  )
}

export default function App() {
  return (
    <div className="relative flex min-h-screen flex-col overflow-hidden bg-white font-['Noto_Sans',sans-serif] text-[11px] text-black">
      <TitleBar />
      <Ribbon />
      <DocumentTabs />

      <main className="grow bg-white px-[2px] pt-[2px] pb-[3px]">
        <div className="border border-[#d6d6d6] pb-[2px]">
          <div className="flex flex-col gap-2 pt-[15px] pr-[7px] pb-[19px] pl-[27px]">
            <StatusRow
              id="case"
              label="Case:"
              value="FTP_Aging_EAS.FTP_Aging_EAS_Perf_005"
              comboWidth="w-[500px]"
              progress={33}
            />
            <StatusRow id="task" label="Task:" value="Analysis" comboWidth="w-[283px]" progress={33} />
          </div>

          <div className="mx-[5px] grid grid-cols-[734fr_3px_527fr]">
            <div className="flex flex-col">
              <Panel title="Curve Monitor" icon={<MonitorCurveIcon />} tabWidth="w-[123px]">
                <MassflowChart />
              </Panel>
              <Divider />
              <Panel title="Curve Monitor" icon={<MonitorCurveIcon />} tabWidth="w-[123px]" second="Curve Monitor">
                <TemperatureChart />
              </Panel>
              <Divider />
              <Panel title="Curve Monitor" icon={<MonitorCurveIcon />} tabWidth="w-[123px]" second="Curve Monitor">
                <EmissionChart />
              </Panel>
            </div>

            <div className="bg-[#cecece]" />

            <div className="flex flex-col">
              <Panel title="Gauge" icon={<GaugeIcon />} tabWidth="w-[80px]">
                <EngineGauges />
              </Panel>
              <Divider />
              <Panel title="Gauge" icon={<GaugeIcon />} tabWidth="w-[80px]">
                <SensorGauges />
              </Panel>
              <Divider />
              <Panel
                title="Multi Value"
                icon={<MultiValueIcon />}
                tabWidth="w-[100px]"
                closable={false}
                className="relative grow"
              >
                <div className="-mb-px flex justify-between pt-[5px] pr-[6px] pl-[25px]">
                  <ValueTable rows={pressures} />
                  <ValueTable rows={temperatures} />
                </div>
                <div className="absolute inset-y-0 left-[262px] z-20 w-[3px] bg-[#cecece]" />
              </Panel>
            </div>
          </div>

          <Timeline />
        </div>
      </main>

      <footer className="border-t-4 border-[#cecece] bg-[#3c3c3c]">
        <div className="flex h-[25px] w-[127px] items-center bg-[#cecece] pt-[2px] pl-[15px] whitespace-nowrap">
          MoBEO_HD_Demo
        </div>
      </footer>

      <TrayMenu />
    </div>
  )
}
